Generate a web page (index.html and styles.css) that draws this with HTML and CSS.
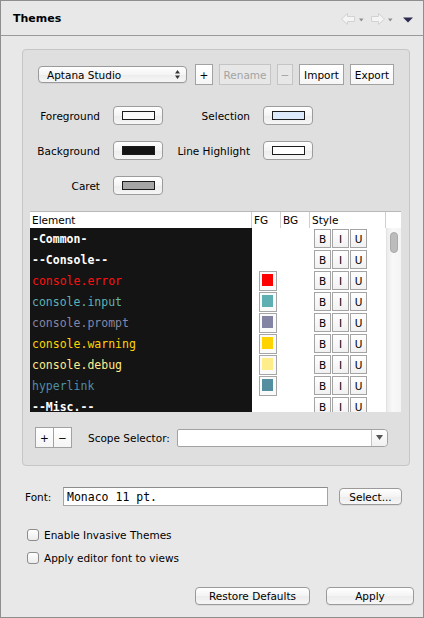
FILE: index.html
```html
<!DOCTYPE html>
<html>
<head>
<meta charset="utf-8">
<link rel="stylesheet" href="styles.css">
</head>
<body>
<div class="window">
  <div class="header">
    <span class="title">Themes</span>
    <svg class="nav" width="76" height="18" viewBox="0 0 76 18">
      <path d="M2.5 10 L8.5 4.5 L8.5 7.5 L15.5 7.5 L15.5 12.5 L8.5 12.5 L8.5 15.5 Z" fill="#f4f4f4" stroke="#d2d2d2" stroke-width="1"/>
      <path d="M20 9.5 L24.5 9.5 L22.25 12.5 Z" fill="#8e8e8e"/>
      <path d="M45.5 10 L39.5 4.5 L39.5 7.5 L32.5 7.5 L32.5 12.5 L39.5 12.5 L39.5 15.5 Z" fill="#f4f4f4" stroke="#d2d2d2" stroke-width="1"/>
      <path d="M49 9.5 L53.5 9.5 L51.25 12.5 Z" fill="#8e8e8e"/>
      <path d="M64 8.5 L74 8.5 L69 13.5 Z" fill="#2c2a4e"/>
    </svg>
  </div>

  <div class="group">
    <div class="toolbar">
      <div class="combo">
        <span>Aptana Studio</span>
        <svg class="updown" width="5" height="9" viewBox="0 0 5 9"><path d="M0 3.5 L5 3.5 L2.5 0 Z M0 5.5 L5 5.5 L2.5 9 Z" fill="#333"/></svg>
      </div>
      <div class="sbtn w-plus">+</div>
      <div class="sbtn disabled w-rename">Rename</div>
      <div class="sbtn disabled w-minus">−</div>
      <div class="sbtn w-import">Import</div>
      <div class="sbtn w-export">Export</div>
    </div>

    <div class="colors">
      <span class="clabel">Foreground</span>
      <div class="cbtn"><span class="sw sw-fg"></span></div>
      <span class="clabel">Selection</span>
      <div class="cbtn"><span class="sw sw-sel"></span></div>
      <span class="clabel">Background</span>
      <div class="cbtn"><span class="sw sw-bg"></span></div>
      <span class="clabel">Line Highlight</span>
      <div class="cbtn"><span class="sw sw-lh"></span></div>
      <span class="clabel">Caret</span>
      <div class="cbtn"><span class="sw sw-caret"></span></div>
    </div>

    <div class="table">
      <div class="thead">
        <div class="th">Element</div>
        <div class="th">FG</div>
        <div class="th">BG</div>
        <div class="th">Style</div>
        <div class="th last"></div>
      </div>
      <div class="tbody">
        <div class="rows">
          <div class="row"><div class="el hd">-Common-</div><div class="fg"></div><div class="bg"></div><div class="st"><span class="biu">B</span><span class="biu">I</span><span class="biu">U</span></div></div>
          <div class="row"><div class="el hd">--Console--</div><div class="fg"></div><div class="bg"></div><div class="st"><span class="biu">B</span><span class="biu">I</span><span class="biu">U</span></div></div>
          <div class="row"><div class="el c-error">console.error</div><div class="fg"><span class="fgsw"><span class="fgin f-error"></span></span></div><div class="bg"></div><div class="st"><span class="biu">B</span><span class="biu">I</span><span class="biu">U</span></div></div>
          <div class="row"><div class="el c-input">console.input</div><div class="fg"><span class="fgsw"><span class="fgin f-input"></span></span></div><div class="bg"></div><div class="st"><span class="biu">B</span><span class="biu">I</span><span class="biu">U</span></div></div>
          <div class="row"><div class="el c-prompt">console.prompt</div><div class="fg"><span class="fgsw"><span class="fgin f-prompt"></span></span></div><div class="bg"></div><div class="st"><span class="biu">B</span><span class="biu">I</span><span class="biu">U</span></div></div>
          <div class="row"><div class="el c-warning">console.warning</div><div class="fg"><span class="fgsw"><span class="fgin f-warning"></span></span></div><div class="bg"></div><div class="st"><span class="biu">B</span><span class="biu">I</span><span class="biu">U</span></div></div>
          <div class="row"><div class="el c-debug">console.debug</div><div class="fg"><span class="fgsw"><span class="fgin f-debug"></span></span></div><div class="bg"></div><div class="st"><span class="biu">B</span><span class="biu">I</span><span class="biu">U</span></div></div>
          <div class="row"><div class="el c-link">hyperlink</div><div class="fg"><span class="fgsw"><span class="fgin f-link"></span></span></div><div class="bg"></div><div class="st"><span class="biu">B</span><span class="biu">I</span><span class="biu">U</span></div></div>
          <div class="row"><div class="el hd">--Misc.--</div><div class="fg"></div><div class="bg"></div><div class="st"><span class="biu">B</span><span class="biu">I</span><span class="biu">U</span></div></div>
        </div>
        <div class="scrollbar"><div class="thumb"></div></div>
      </div>
    </div>

    <div class="scope">
      <div class="pm">+</div>
      <div class="pm pm2">−</div>
      <span class="scope-label">Scope Selector:</span>
      <div class="scombo">
        <div class="sfield"></div>
        <div class="sarrow"><svg width="7" height="5" viewBox="0 0 7 5"><path d="M0 0 L7 0 L3.5 5 Z" fill="#555"/></svg></div>
      </div>
    </div>
  </div>

  <div class="font-row">
    <span class="font-label">Font:</span>
    <div class="font-input">Monaco 11 pt.</div>
    <div class="btn w-select">Select...</div>
  </div>

  <div class="check check1"><span class="box"></span><span>Enable Invasive Themes</span></div>
  <div class="check check2"><span class="box"></span><span>Apply editor font to views</span></div>

  <div class="actions">
    <div class="btn w-restore">Restore Defaults</div>
    <div class="btn w-apply">Apply</div>
  </div>
</div>
</body>
</html>
```

FILE: styles.css
```css
* { box-sizing: border-box; }
html, body { margin: 0; padding: 0; }
body {
  width: 424px;
  height: 618px;
  overflow: hidden;
  font-family: "DejaVu Sans", sans-serif;
  font-size: 10.5px;
  color: #000;
  background: #e8e8e8;
}
.window {
  width: 424px;
  height: 618px;
  border: 1px solid #8e8e8e;
  background: #e8e8e8;
  display: flex;
  flex-direction: column;
}
.header {
  height: 35px;
  flex: none;
  border-bottom: 1px solid #9a9a9a;
  display: flex;
  align-items: center;
  padding: 0 8px 0 12px;
}
.title { font-weight: bold; font-size: 11px; }
.nav { margin-left: auto; display: block; }

.group {
  flex: none;
  margin: 13px 13px 0 21px;
  height: 417px;
  border: 1px solid #c6c6c6;
  border-radius: 4px;
  background: #dfdfdf;
  padding-top: 14px;
  display: flex;
  flex-direction: column;
}

/* toolbar */
.toolbar {
  display: flex;
  align-items: center;
  height: 21px;
  padding-left: 15px;
  flex: none;
}
.combo {
  width: 149px;
  height: 17px;
  margin-right: 8px;
  border: 1px solid #9a9a9a;
  border-radius: 4px;
  background: linear-gradient(#ffffff, #f4f4f4 50%, #ececec 51%, #f6f6f6);
  display: flex;
  align-items: center;
  justify-content: space-between;
  padding: 0 6px 0 8px;
  box-shadow: 0 1px 0 rgba(0,0,0,0.05);
}
.updown { display: block; }
.sbtn {
  height: 21px;
  border: 1px solid #a2a2a2;
  background: linear-gradient(#ffffff, #f6f6f6);
  display: flex;
  align-items: center;
  justify-content: center;
  margin-right: 6px;
}
.sbtn.disabled {
  border-color: #c4c4c4;
  background: #e7e7e7;
  color: #a3a3a3;
}
.w-plus { width: 18px; }
.w-rename { width: 52px; }
.w-minus { width: 16px; }
.w-import { width: 45px; }
.w-export { width: 44px; margin-right: 0; }

/* colour grid */
.colors {
  flex: none;
  margin-top: 21px;
  padding-left: 14px;
  display: grid;
  grid-template-columns: 63px 50px 74px 50px;
  grid-auto-rows: 19px;
  column-gap: 13px;
  row-gap: 16px;
}
.clabel {
  justify-self: end;
  align-self: center;
  white-space: nowrap;
}
.cbtn {
  width: 50px;
  height: 19px;
  border: 1px solid #9c9c9c;
  border-radius: 4px;
  background: linear-gradient(#ffffff, #f4f4f4 50%, #ececec 51%, #f6f6f6);
  display: flex;
  align-items: center;
  justify-content: center;
}
.sw {
  display: block;
  width: 33px;
  height: 9px;
  border: 1px solid #1c1c1c;
}
.sw-fg { background: #fafafa; }
.sw-sel { background: #dbe9fa; }
.sw-bg { background: #151515; }
.sw-lh { background: #ffffff; }
.sw-caret { background: #a6a6a6; }

/* table */
.table {
  flex: none;
  margin-top: 16px;
  margin-left: 7px;
  width: 371px;
  height: 201px;
  overflow: hidden;
  background: #fff;
  display: flex;
  flex-direction: column;
}
.thead {
  flex: none;
  height: 17px;
  border-top: 1px solid #b9b9b9;
  display: grid;
  grid-template-columns: 222px 29px 29px 76px 15px;
  background: #fff;
}
.th {
  border-right: 1px solid #cfcfcf;
  padding-left: 2px;
  display: flex;
  align-items: center;
  white-space: nowrap;
}
.th.last { border-right: none; }
.tbody {
  flex: 1;
  display: flex;
  overflow: hidden;
}
.rows { width: 356px; flex: none; }
.row {
  height: 21px;
  display: grid;
  grid-template-columns: 222px 29px 29px 76px;
}
.el {
  background: #141414;
  font-family: "DejaVu Sans Mono", monospace;
  font-size: 11.5px;
  padding-left: 2px;
  display: flex;
  align-items: center;
  white-space: nowrap;
}
.el.hd { color: #fff; font-weight: bold; }
.c-error { color: #ff1010; }
.c-input { color: #5fb1b4; }
.c-prompt { color: #8587a5; }
.c-warning { color: #ffd500; }
.c-debug { color: #ffec8c; }
.c-link { color: #4f8da6; }
.fg {
  display: flex;
  align-items: center;
  padding-left: 7px;
}
.fgsw {
  display: block;
  width: 18px;
  height: 20px;
  border: 1px solid #a6a6a6;
  background: #fafafa;
  padding: 2px 3px 4px 2px;
}
.fgin { display: block; width: 11px; height: 12px; }
.f-error { background: #ff0000; }
.f-input { background: #5eafb2; }
.f-prompt { background: #8384a4; }
.f-warning { background: #ffd300; }
.f-debug { background: #ffec8b; }
.f-link { background: #538ea0; }
.st {
  display: flex;
  align-items: center;
  padding-left: 4px;
  gap: 1px;
}
.biu {
  width: 17px;
  height: 19px;
  border: 1px solid #a4a4a4;
  background: linear-gradient(#ffffff, #f1f1f1);
  display: flex;
  align-items: center;
  justify-content: center;
  font-size: 10.5px;
}
.scrollbar {
  width: 15px;
  flex: none;
  background: linear-gradient(90deg, #ececec, #f8f8f8 40%, #f4f4f4);
  border-left: 1px solid #e2e2e2;
  padding: 4px 0 0 3px;
}
.thumb {
  width: 8px;
  height: 21px;
  border-radius: 4px;
  background: #bcbcbc;
  border: 1px solid #aaaaaa;
}

/* scope row */
.scope {
  flex: none;
  margin-top: 15px;
  padding-left: 12px;
  height: 21px;
  display: flex;
  align-items: center;
}
.pm {
  width: 19px;
  height: 21px;
  border: 1px solid #a2a2a2;
  background: linear-gradient(#ffffff, #f5f5f5);
  display: flex;
  align-items: center;
  justify-content: center;
}
.pm2 { margin-left: -1px; }
.scope-label { margin-left: 16px; white-space: nowrap; }
.scombo {
  margin-left: 7px;
  width: 211px;
  height: 18px;
  border: 1px solid #a2a2a2;
  border-radius: 2px 4px 4px 2px;
  background: #fff;
  display: flex;
}
.sfield { flex: 1; }
.sarrow {
  width: 16px;
  border-left: 1px solid #c4c4c4;
  background: linear-gradient(#ffffff, #f0f0f0);
  border-radius: 0 4px 4px 0;
  display: flex;
  align-items: center;
  justify-content: center;
}
.sarrow svg { display: block; }

/* font row */
.font-row {
  flex: none;
  margin-top: 21px;
  padding-left: 24px;
  height: 19px;
  display: flex;
  align-items: center;
}
.font-label { width: 38px; }
.font-input {
  width: 265px;
  height: 19px;
  border: 1px solid #a4a4a4;
  border-top-color: #8c8c8c;
  background: #fff;
  font-family: "DejaVu Sans Mono", monospace;
  font-size: 11.5px;
  padding-left: 3px;
  display: flex;
  align-items: center;
  white-space: nowrap;
}
.btn {
  height: 18px;
  border: 1px solid #9a9a9a;
  border-radius: 4px;
  background: linear-gradient(#ffffff, #f4f4f4 50%, #ececec 51%, #f6f6f6);
  display: flex;
  align-items: center;
  justify-content: center;
  white-space: nowrap;
  box-shadow: 0 1px 0 rgba(0,0,0,0.06);
}
.w-select { width: 63px; height: 17px; margin-left: 11px; }

/* checks */
.check {
  flex: none;
  height: 14px;
  padding-left: 26px;
  display: flex;
  align-items: center;
}
.check1 { margin-top: 22px; }
.check2 { margin-top: 9px; }
.box {
  width: 12px;
  height: 12px;
  border: 1px solid #8d8d8d;
  border-radius: 3px;
  background: linear-gradient(#ffffff, #ececec);
  margin-right: 5px;
  flex: none;
}

/* actions */
.actions {
  flex: none;
  margin-top: 22px;
  padding-right: 9px;
  display: flex;
  justify-content: flex-end;
}
.w-restore { width: 115px; margin-right: 16px; }
.w-apply { width: 88px; }
```
